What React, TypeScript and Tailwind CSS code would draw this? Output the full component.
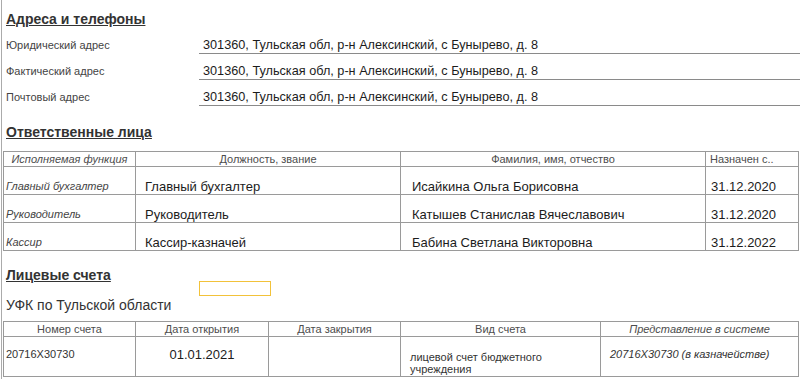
export default function App() {
  const addresses = [
    ['Юридический адрес', '301360, Тульская обл, р-н Алексинский, с Бунырево, д. 8'],
    ['Фактический адрес', '301360, Тульская обл, р-н Алексинский, с Бунырево, д. 8'],
    ['Почтовый адрес', '301360, Тульская обл, р-н Алексинский, с Бунырево, д. 8'],
  ];

  const people = [
    ['Главный бухгалтер', 'Главный бухгалтер', 'Исайкина Ольга Борисовна', '31.12.2020'],
    ['Руководитель', 'Руководитель', 'Катышев Станислав Вячеславович', '31.12.2020'],
    ['Кассир', 'Кассир-казначей', 'Бабина Светлана Викторовна', '31.12.2022'],
  ];

  const heading = 'pl-[4px] text-[14px] leading-[18px] font-bold underline text-[#333]';
  const th = 'border-r border-b border-[#9a9a9a] text-[11px] leading-[14px] text-[#4d4d4d] truncate';
  const td = 'border-r border-b border-[#9a9a9a]';

  return (
    <div className="w-[803px] h-[379px] overflow-hidden bg-white pl-px font-['Liberation_Sans',Arial,sans-serif]">
      <div className="h-full border-l border-[#ababab] flex flex-col">
        <div className={`mt-[10px] ${heading}`}>Адреса и телефоны</div>

        {addresses.map(([label, value]) => (
          <div key={label} className="flex h-[26px] items-end">
            <div className="w-[197px] pl-[4px] pb-px text-[11px] leading-[15px] text-[#444]">{label}</div>
            <div className="w-[601px] pl-[4px] border-b border-[#8a8a8a] text-[12.7px] leading-[15px] text-[#1c1c1c]">
              {value}
            </div>
          </div>
        ))}

        <div className={`mt-[17px] ${heading}`}>Ответственные лица</div>

        <div className="mt-[10px] ml-px w-[796px] border-t border-l border-[#9a9a9a]">
          <div className="grid grid-cols-[132px_265px_305px_93px] h-[15px]">
            <div className={`${th} text-center italic`}>Исполняемая функция</div>
            <div className={`${th} text-center`}>Должность, звание</div>
            <div className={`${th} text-center`}>Фамилия, имя, отчество</div>
            <div className={`${th} pl-[4px]`}>Назначен с..</div>
          </div>
          {people.map(([fn, pos, name, date]) => (
            <div key={fn} className="grid grid-cols-[132px_265px_305px_93px] h-[28px]">
              <div className={`${td} flex items-end pl-[2px] pb-px text-[11px] leading-[14px] italic text-[#444]`}>{fn}</div>
              <div className={`${td} flex items-end pl-[9px] text-[13px] leading-[15px] text-[#1c1c1c]`}>{pos}</div>
              <div className={`${td} flex items-end pl-[11px] text-[13px] leading-[15px] text-[#1c1c1c]`}>{name}</div>
              <div className={`${td} flex items-end pl-[5px] text-[13px] leading-[15px] text-[#1c1c1c]`}>{date}</div>
            </div>
          ))}
        </div>

        <div className={`mt-[15px] ${heading}`}>Лицевые счета</div>
        <div className="-mt-[3px] ml-[197px] w-[72px] h-[15px] border border-[#f2c23a]" />
        <div className="pl-[4px] text-[14px] leading-[18px] text-[#333]">УФК по Тульской области</div>

        <div className="mt-[7px] ml-px w-[796px] border-t border-l border-[#9a9a9a]">
          <div className="grid grid-cols-[132px_133px_132px_200px_198px] h-[15px]">
            <div className={`${th} text-center`}>Номер счета</div>
            <div className={`${th} text-center`}>Дата открытия</div>
            <div className={`${th} text-center`}>Дата закрытия</div>
            <div className={`${th} text-center`}>Вид счета</div>
            <div className={`${th} text-center italic`}>Представление в системе</div>
          </div>
          <div className="grid grid-cols-[132px_133px_132px_200px_198px] h-[40px]">
            <div className={`${td} pl-[2px] pt-[10px] text-[11px] leading-[14px] text-[#333]`}>20716X30730</div>
            <div className={`${td} pt-[10px] text-center text-[13px] leading-[15px] text-[#1c1c1c]`}>01.01.2021</div>
            <div className={td} />
            <div className={`${td} pl-[9px] pt-[14px] text-[11px] leading-[12px] text-[#333]`}>
              <div className="w-[140px]">лицевой счет бюджетного учреждения</div>
            </div>
            <div className={`${td} pl-[9px] pt-[10px] text-[11px] leading-[14px] italic text-[#333]`}>
              20716X30730 (в казначействе)
            </div>
          </div>
        </div>
      </div>
    </div>
  );
}
